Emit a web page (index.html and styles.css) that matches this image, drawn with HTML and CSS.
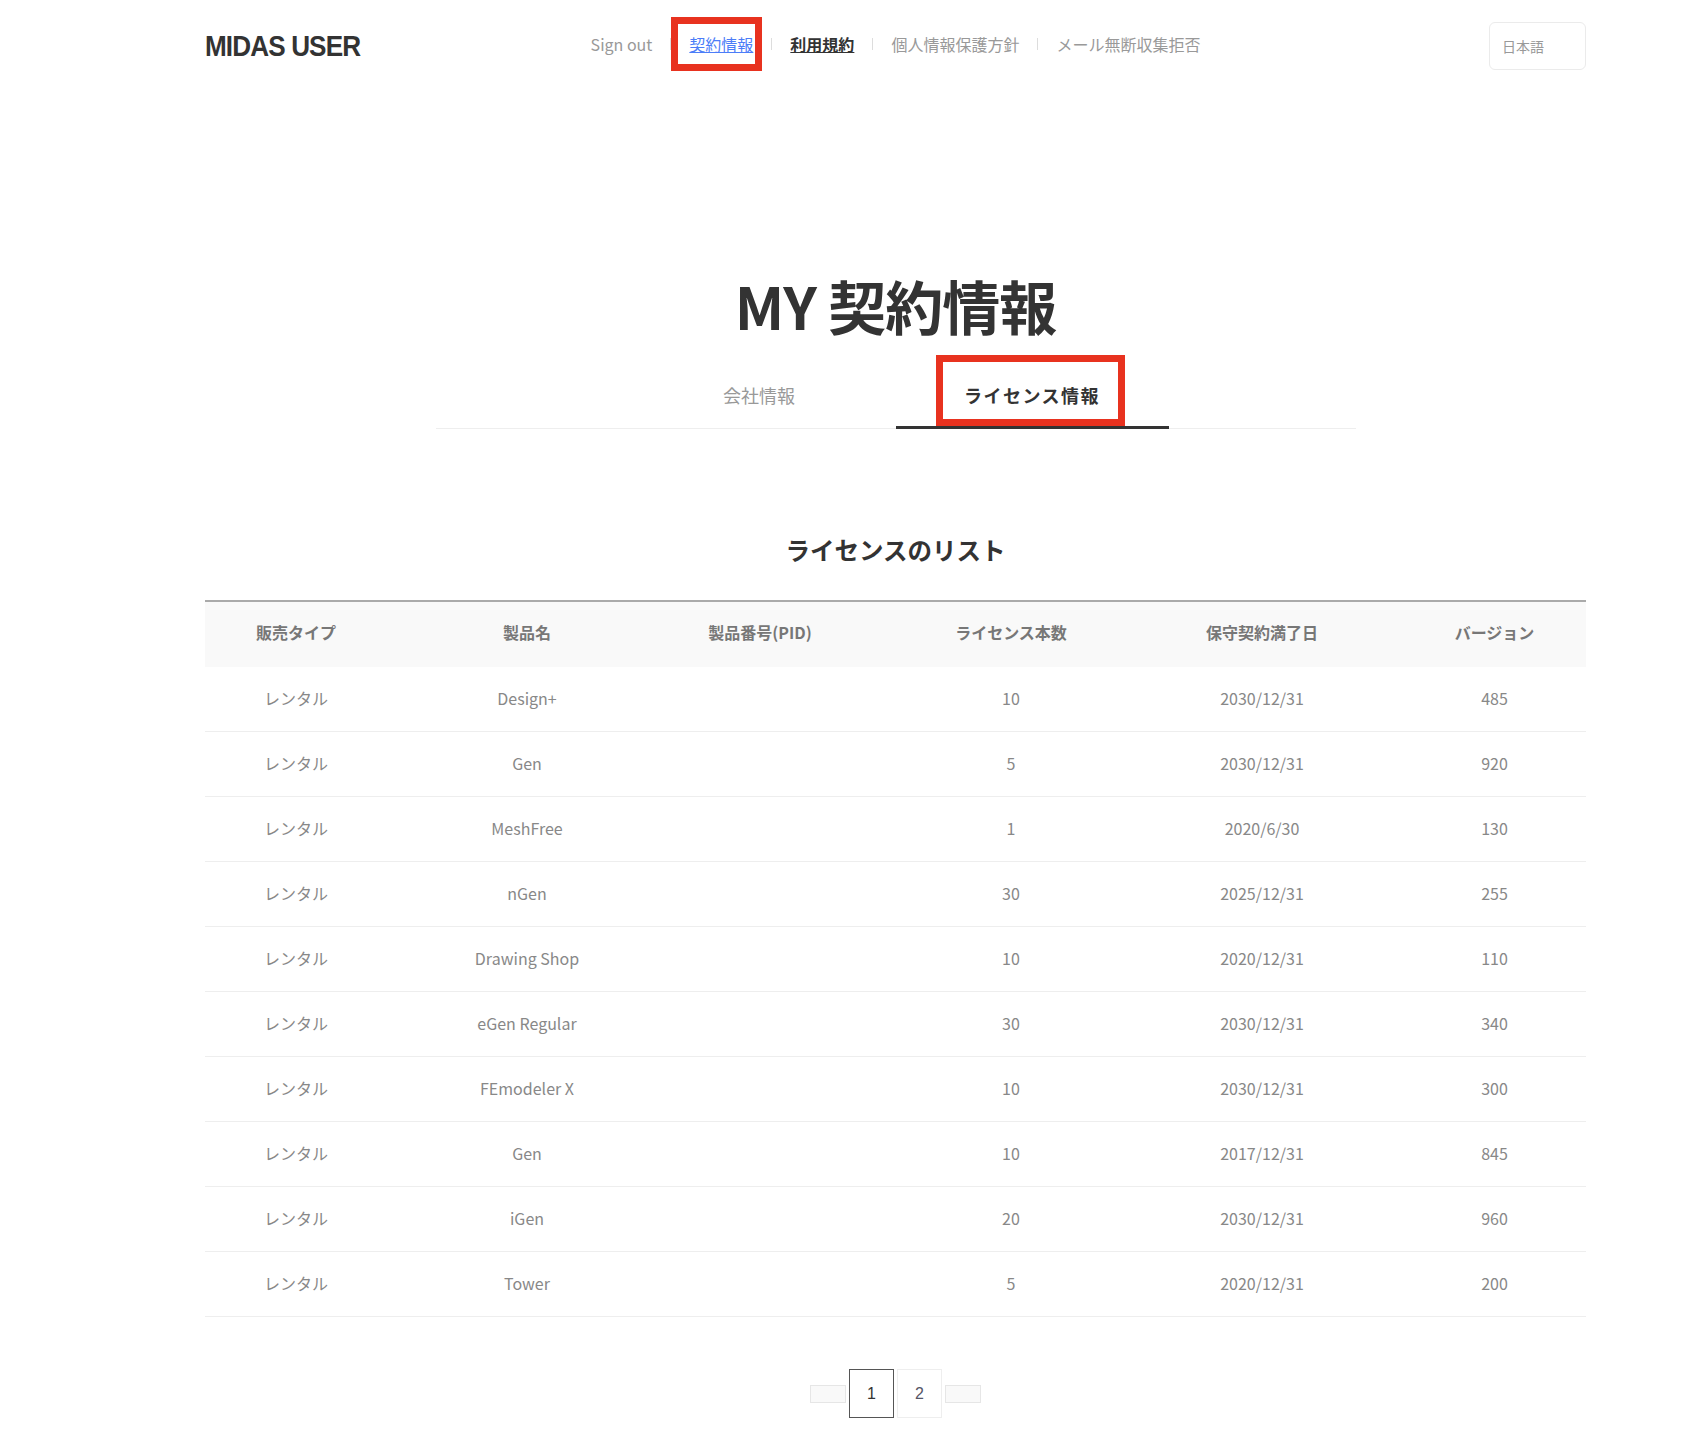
FILE: index.html
```html
<!DOCTYPE html>
<html lang="ja">
<head>
    <meta charset="UTF-8">
    <title>MY 契約情報</title>
    <link rel="stylesheet" href="styles.css">
</head>
<body>
<div class="wrap">
    <div class="header">
        <div class="logo-wrap"><div class="logo">MIDAS USER</div></div>
        <div class="gnb">
            <a href="#" class="gnb-item">Sign out</a>
            <span class="gnb-sep"></span>
            <a href="#" class="gnb-item gnb-on"><span class="mark mark-gnb">契約情報</span></a>
            <span class="gnb-sep"></span>
            <a href="#" class="gnb-item gnb-bold">利用規約</a>
            <span class="gnb-sep"></span>
            <a href="#" class="gnb-item">個人情報保護方針</a>
            <span class="gnb-sep"></span>
            <a href="#" class="gnb-item">メール無断収集拒否</a>
        </div>
        <div class="lang-wrap">
            <div class="lang">日本語</div>
        </div>
    </div>

    <h1 class="page-title">MY 契約情報</h1>

    <div class="tabs">
        <a href="#" class="tab">会社情報</a>
        <a href="#" class="tab tab-on"><span class="mark mark-tab">ライセンス情報</span></a>
    </div>

    <h2 class="list-title">ライセンスのリスト</h2>

    <table class="license-table">
        <colgroup>
            <col style="width:204px">
            <col style="width:236px">
            <col style="width:230px">
            <col style="width:272px">
            <col style="width:230px">
            <col style="width:209px">
        </colgroup>
        <thead>
            <tr>
                <th>販売タイプ</th>
                <th>製品名</th>
                <th>製品番号(PID)</th>
                <th>ライセンス本数</th>
                <th>保守契約満了日</th>
                <th>バージョン</th>
            </tr>
        </thead>
        <tbody>
            <tr><td>レンタル</td><td>Design+</td><td></td><td>10</td><td>2030/12/31</td><td>485</td></tr>
            <tr><td>レンタル</td><td>Gen</td><td></td><td>5</td><td>2030/12/31</td><td>920</td></tr>
            <tr><td>レンタル</td><td>MeshFree</td><td></td><td>1</td><td>2020/6/30</td><td>130</td></tr>
            <tr><td>レンタル</td><td>nGen</td><td></td><td>30</td><td>2025/12/31</td><td>255</td></tr>
            <tr><td>レンタル</td><td>Drawing Shop</td><td></td><td>10</td><td>2020/12/31</td><td>110</td></tr>
            <tr><td>レンタル</td><td>eGen Regular</td><td></td><td>30</td><td>2030/12/31</td><td>340</td></tr>
            <tr><td>レンタル</td><td>FEmodeler X</td><td></td><td>10</td><td>2030/12/31</td><td>300</td></tr>
            <tr><td>レンタル</td><td>Gen</td><td></td><td>10</td><td>2017/12/31</td><td>845</td></tr>
            <tr><td>レンタル</td><td>iGen</td><td></td><td>20</td><td>2030/12/31</td><td>960</td></tr>
            <tr><td>レンタル</td><td>Tower</td><td></td><td>5</td><td>2020/12/31</td><td>200</td></tr>
        </tbody>
    </table>

    <div class="paging">
        <a href="#" class="page-arrow"></a>
        <a href="#" class="page-num page-on">1</a>
        <a href="#" class="page-num">2</a>
        <a href="#" class="page-arrow"></a>
    </div>
</div>
</body>
</html>
```

FILE: styles.css
```css
html {
    font-family: "Noto Sans CJK JP", "Noto Sans", sans-serif;
}
body {
    margin: 0;
    color: #333;
    background: #fff;
}
a {
    text-decoration: none;
    color: inherit;
}
.wrap {
    width: 1381px;
    margin-left: 205px;
}

/* header */
.header {
    display: grid;
    grid-template-columns: 1fr auto 1fr;
    align-items: center;
    height: 92px;
}
.logo {
    display: inline-block;
    font-family: "Liberation Sans", Arial, sans-serif;
    font-weight: bold;
    font-size: 30px;
    letter-spacing: -1px;
    color: #333;
    transform: scaleX(0.87);
    transform-origin: left center;
}
.gnb {
    display: flex;
    align-items: center;
    margin-top: -5px;
}
.gnb-item {
    font-size: 16px;
    color: #999;
}
.gnb-on {
    color: #4c7df8;
    text-decoration: underline;
}
.gnb-bold {
    color: #333;
    font-weight: bold;
    text-decoration: underline;
}
.gnb-sep {
    width: 1px;
    height: 12px;
    background: #ddd;
    margin: 0 18px;
}
.lang-wrap {
    display: flex;
    justify-content: flex-end;
}
.lang {
    width: 83px;
    height: 46px;
    line-height: 46px;
    padding-left: 12px;
    border: 1px solid #ebebeb;
    border-radius: 6px;
    font-size: 14px;
    color: #999;
}

/* red highlight boxes */
.mark {
    position: relative;
}
.mark::after {
    content: "";
    position: absolute;
    border: 7px solid #e8321f;
}
.mark-gnb::after {
    left: -18px;
    right: -9px;
    top: -15px;
    bottom: -15px;
}
.mark-tab::after {
    left: -28px;
    right: -25px;
    top: -27px;
    bottom: -18px;
}

/* title & tabs */
.page-title {
    margin: 178px 0 0;
    text-align: center;
    font-size: 58px;
    line-height: 70px;
    font-weight: bold;
    color: #333;
    letter-spacing: -1px;
}
.tabs {
    width: 920px;
    margin: 22px auto 0;
    display: flex;
    justify-content: center;
    border-bottom: 1px solid #eee;
}
.tab {
    width: 273px;
    text-align: center;
    font-size: 18px;
    line-height: 27px;
    padding: 20px 0 17px;
    color: #999;
    border-bottom: 3px solid transparent;
    margin-bottom: -1px;
}
.tab-on {
    color: #333;
    font-weight: bold;
    letter-spacing: 1.5px;
    border-bottom-color: #333;
}

/* list */
.list-title {
    margin: 103px 0 0;
    text-align: center;
    font-size: 24.5px;
    line-height: 36px;
    font-weight: bold;
    color: #333;
}
.license-table {
    width: 1381px;
    margin-top: 32px;
    border-collapse: collapse;
    table-layout: fixed;
    border-top: 2px solid #aaa;
}
.license-table th {
    height: 60px;
    background: #f9f9f9;
    font-size: 16px;
    font-weight: bold;
    color: #777;
    padding: 0 0 5px;
}
.license-table td {
    height: 62px;
    border-bottom: 1px solid #eee;
    text-align: center;
    font-size: 16px;
    color: #888;
    padding: 0 0 2px;
}
.license-table th:first-child,
.license-table td:first-child {
    padding-right: 22px;
}
.license-table th:last-child,
.license-table td:last-child {
    padding-left: 26px;
}

/* paging */
.paging {
    display: flex;
    justify-content: center;
    align-items: center;
    gap: 3px;
    margin-top: 52px;
}
.page-arrow {
    width: 34px;
    height: 16px;
    background: #f9f9f9;
    border: 1px solid #e6e6e6;
}
.page-num {
    width: 43px;
    height: 47px;
    line-height: 47px;
    text-align: center;
    border: 1px solid #eee;
    font-family: "Liberation Sans", Arial, sans-serif;
    font-size: 16px;
    color: #556;
}
.page-on {
    border-color: #555;
    color: #333;
}
```
